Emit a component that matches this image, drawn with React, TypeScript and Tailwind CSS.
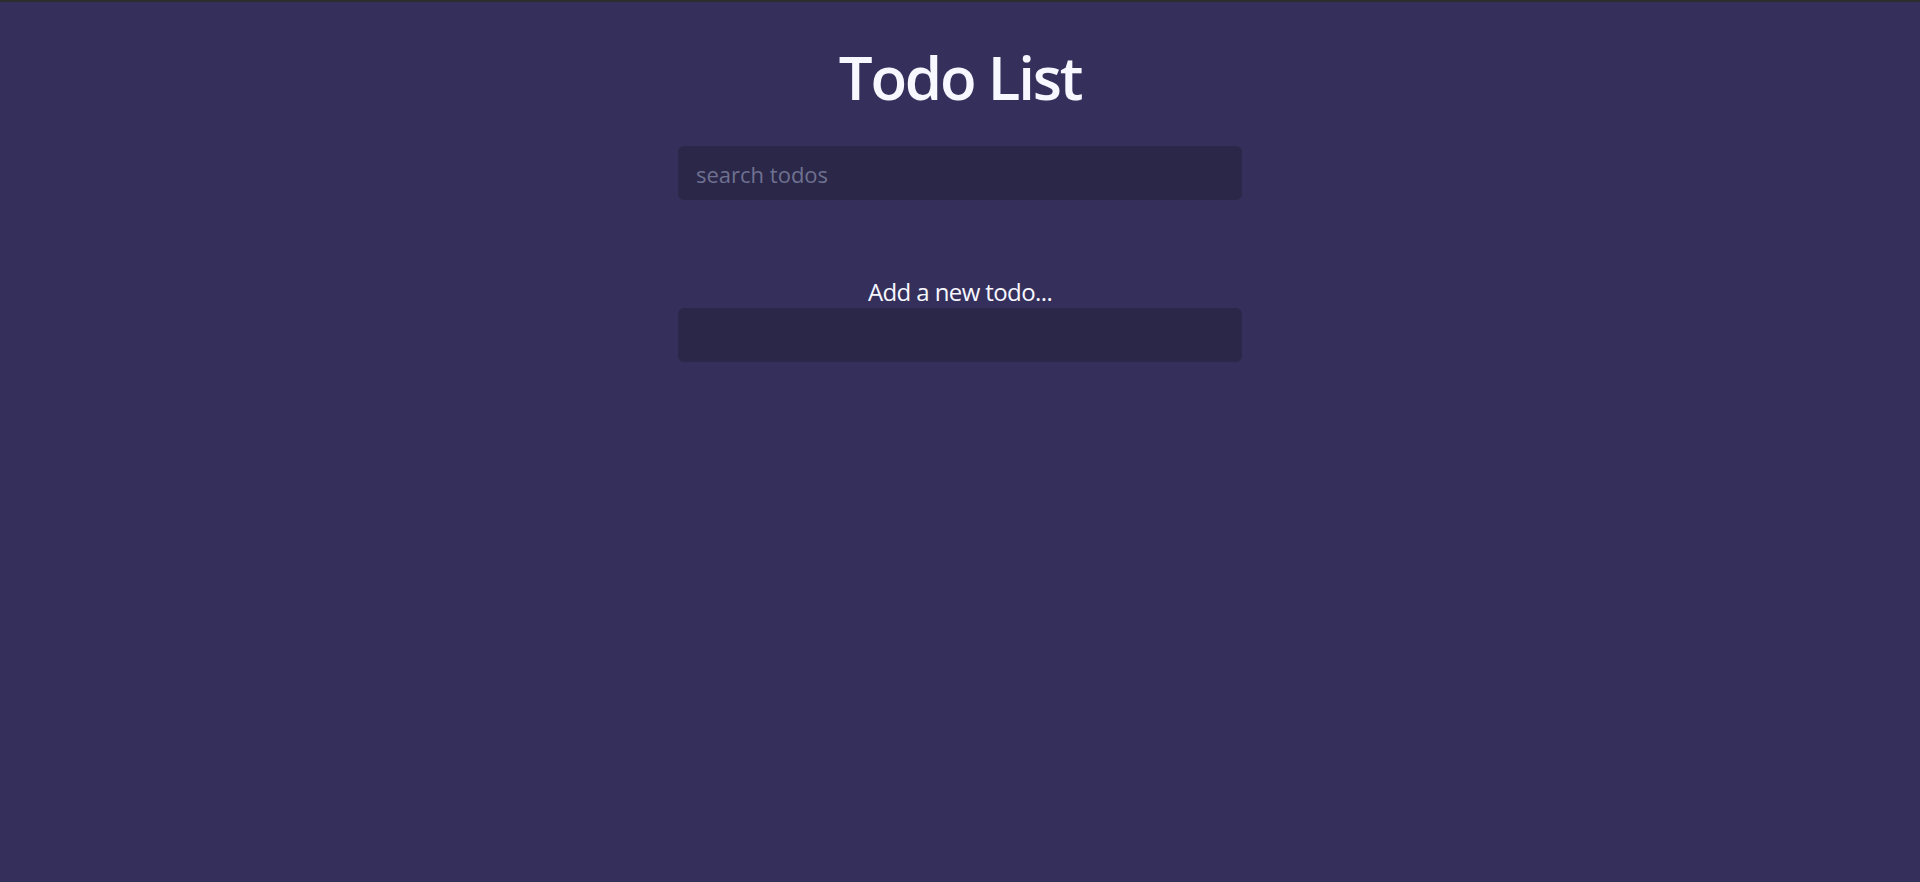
import React from 'react';

export default function App() {
  return (
    <div
      className="min-h-screen bg-[#352f5b] border-t-2 border-[#2d2d30] flex flex-col items-center text-white"
      style={{ fontFamily: '"Open Sans", "Noto Sans", sans-serif' }}
    >
      <h1 className="mt-[36px] text-[60px] leading-[78px] font-semibold text-[#f7f7ff] tracking-[-2.2px]">Todo List</h1>

      <form className="mt-[30px] w-[564px]">
        <input
          type="text"
          placeholder="search todos"
          className="w-full h-[54px] rounded-md bg-[#2b2749] px-[18px] pt-[2px] text-[22px] text-white placeholder:text-[#6e7190] outline-none"
        />
      </form>

      <form className="mt-[77px] w-[564px] flex flex-col items-center">
        <label className="text-[24px] leading-[30px] text-[#f7f7ff] tracking-[-0.6px]">Add a new todo...</label>
        <input
          type="text"
          className="mt-[1px] w-full h-[54px] rounded-md bg-[#2b2749] px-[18px] text-[22px] text-white outline-none"
        />
      </form>
    </div>
  );
}
